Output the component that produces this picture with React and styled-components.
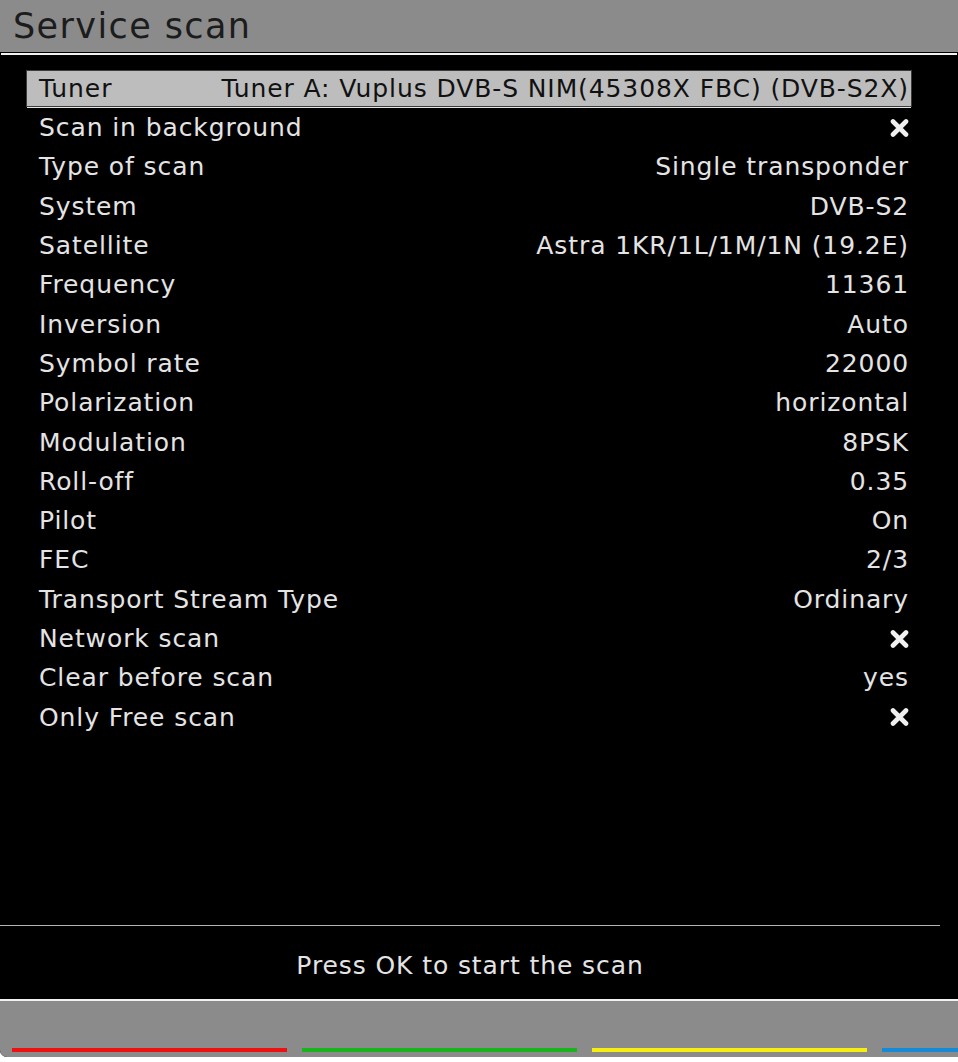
import React from 'react';
import styled, { createGlobalStyle } from 'styled-components';

const GlobalStyle = createGlobalStyle`
  html, body {
    margin: 0;
    padding: 0;
    background: #ffffff;
  }
  body {
    font-family: "DejaVu Sans", "Liberation Sans", sans-serif;
  }
`;

const Screen = styled.div`
  width: 958px;
  height: 1057px;
  background: #000;
  display: flex;
  flex-direction: column;
  overflow: hidden;
  border-bottom-left-radius: 7px;
`;

const TitleBar = styled.div`
  height: 52px;
  background: #8b8b8b;
  display: flex;
  align-items: center;
  padding-left: 13px;
  border-bottom: 1px solid #000;
  box-shadow: 0 3px 0 -1px #f2f2f2;
  margin-bottom: 2px;
`;

const Title = styled.h1`
  margin: 0;
  font-size: 35px;
  font-weight: normal;
  color: #1c1c1c;
  letter-spacing: 1.4px;
`;

const List = styled.div`
  flex: 1;
  padding: 15px 46px 0 26px;
`;

const Row = styled.div`
  box-sizing: border-box;
  display: flex;
  align-items: center;
  justify-content: space-between;
  padding: 0 2px 0 12px;
  font-size: 25px;
  letter-spacing: 0.9px;
  color: ${p => (p.$selected ? '#111' : '#e4e4e4')};
  background: ${p => (p.$selected ? '#bdbdbd' : 'transparent')};
  border: 1px solid ${p => (p.$selected ? '#3c3c3c' : 'transparent')};
  box-shadow: ${p => (p.$selected ? '0 2px 0 -1px #e6e6e6' : 'none')};
  margin-bottom: ${p => (p.$selected ? '1px' : '0')};
  height: ${p => (p.$selected ? '37px' : '39.3px')};
  white-space: nowrap;
`;

const Label = styled.span``;

const Value = styled.span`
  display: flex;
  align-items: center;
`;

const Divider = styled.div`
  width: 940px;
  height: 1px;
  background: #b4b4b4;
`;

const Hint = styled.div`
  height: 73px;
  display: flex;
  align-items: center;
  justify-content: center;
  padding: 6px 18px 0 0;
  box-sizing: border-box;
  font-size: 25px;
  letter-spacing: 0.9px;
  color: #e4e4e4;
  border-bottom: 1px solid #000;
  box-shadow: 0 2px 0 0 #f2f2f2;
`;

const ButtonBar = styled.div`
  height: 56px;
  margin-top: 2px;
  background: #8b8b8b;
  display: flex;
  align-items: flex-end;
  gap: 15px;
  padding: 0 0 5px 12px;
  box-sizing: border-box;
`;

const ColorKey = styled.div`
  flex: 0 0 275px;
  height: 4px;
  background: ${p => p.$color};
`;

const Cross = () => (
  <svg width="19" height="18" viewBox="0 0 19 18">
    <path d="M3 2.5 L16 15.5 M16 2.5 L3 15.5" stroke="#f0f0f0" strokeWidth="4.6" strokeLinecap="round" />
  </svg>
);

const rows = [
  ['Tuner', 'Tuner A: Vuplus DVB-S NIM(45308X FBC) (DVB-S2X)'],
  ['Scan in background', 'x'],
  ['Type of scan', 'Single transponder'],
  ['System', 'DVB-S2'],
  ['Satellite', 'Astra 1KR/1L/1M/1N (19.2E)'],
  ['Frequency', '11361'],
  ['Inversion', 'Auto'],
  ['Symbol rate', '22000'],
  ['Polarization', 'horizontal'],
  ['Modulation', '8PSK'],
  ['Roll-off', '0.35'],
  ['Pilot', 'On'],
  ['FEC', '2/3'],
  ['Transport Stream Type', 'Ordinary'],
  ['Network scan', 'x'],
  ['Clear before scan', 'yes'],
  ['Only Free scan', 'x'],
];

const keys = ['#ee1111', '#19b31b', '#f6ee10', '#168ad6'];

export default function App() {
  return (
    <>
      <GlobalStyle />
      <Screen>
        <TitleBar>
          <Title>Service scan</Title>
        </TitleBar>
        <List>
          {rows.map(([label, value], i) => (
            <Row key={label} $selected={i === 0}>
              <Label>{label}</Label>
              <Value>{value === 'x' ? <Cross /> : value}</Value>
            </Row>
          ))}
        </List>
        <Divider />
        <Hint>Press OK to start the scan</Hint>
        <ButtonBar>
          {keys.map(c => (
            <ColorKey key={c} $color={c} />
          ))}
        </ButtonBar>
      </Screen>
    </>
  );
}
